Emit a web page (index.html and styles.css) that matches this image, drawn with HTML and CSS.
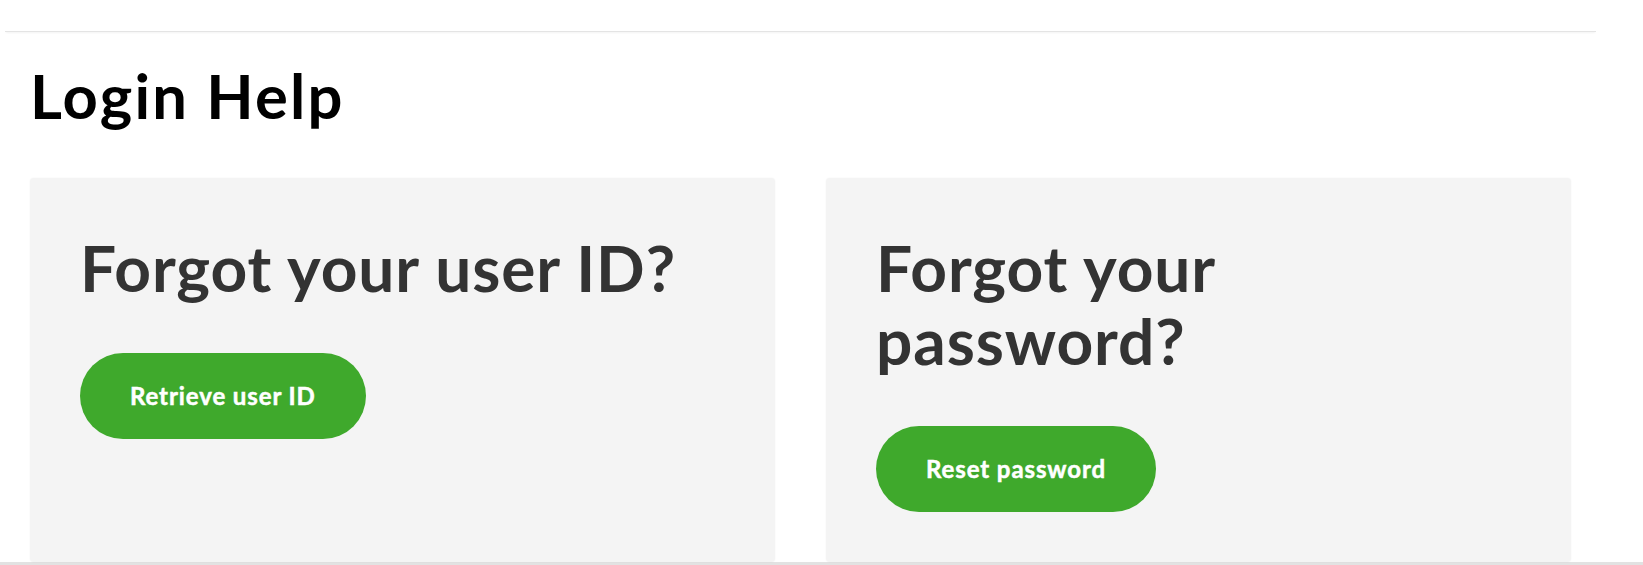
FILE: index.html
```
<!DOCTYPE html>
<html lang="en">
<head>
<meta charset="utf-8">
<title>Login Help</title>
<link rel="stylesheet" href="styles.css">
</head>
<body>
<div class="page">
  <header class="topbar"></header>
  <main class="content">
    <h1 class="page-title">Login Help</h1>
    <div class="cards">
      <section class="card">
        <h2 class="card-title">Forgot your user ID?</h2>
        <a class="btn" href="#">Retrieve user ID</a>
      </section>
      <section class="card">
        <h2 class="card-title">Forgot your password?</h2>
        <a class="btn" href="#">Reset password</a>
      </section>
    </div>
  </main>
</div>
<div class="bottom-rule"></div>
</body>
</html>
```
FILE: styles.css
```
html, body {
  margin: 0;
  padding: 0;
  background: #ffffff;
  overflow: hidden;
}

body {
  font-family: Lato, "Open Sans", sans-serif;
}

.page {
  width: 1591px;
  margin-left: 5px;
}

.topbar {
  height: 31px;
  border-bottom: 1px solid #e4e4e4;
  box-shadow: 0 2px 2px -1px rgba(0, 0, 0, 0.05);
}

.content {
  padding: 0 25px;
}

.page-title {
  margin: 27px 0 0;
  font-size: 61.5px;
  line-height: 73.8px;
  font-weight: 700;
  letter-spacing: 2.2px;
  color: #000000;
}

.cards {
  display: grid;
  grid-template-columns: 1fr 1fr;
  gap: 51px;
  margin-top: 45px;
}

.card {
  background: #f4f4f4;
  border-radius: 4px;
  box-shadow: 0 0 2px rgba(0, 0, 0, 0.05);
  padding: 53px 50px 0;
  height: 384px;
  box-sizing: border-box;
  display: flex;
  flex-direction: column;
  align-items: flex-start;
}

.card-title {
  margin: 0;
  font-size: 64px;
  line-height: 73px;
  font-weight: 700;
  letter-spacing: 0.9px;
  color: #333333;
}

.btn {
  margin-top: 49px;
  display: inline-flex;
  align-items: center;
  justify-content: center;
  height: 86px;
  padding: 0 50px;
  border-radius: 43px;
  background: #3fa92c;
  color: #ffffff;
  font-size: 24px;
  font-weight: 700;
  letter-spacing: 0.9px;
  -webkit-text-stroke: 0.5px #ffffff;
  text-decoration: none;
  white-space: nowrap;
}

.bottom-rule {
  height: 3px;
  background: #e2e2e2;
}
```
